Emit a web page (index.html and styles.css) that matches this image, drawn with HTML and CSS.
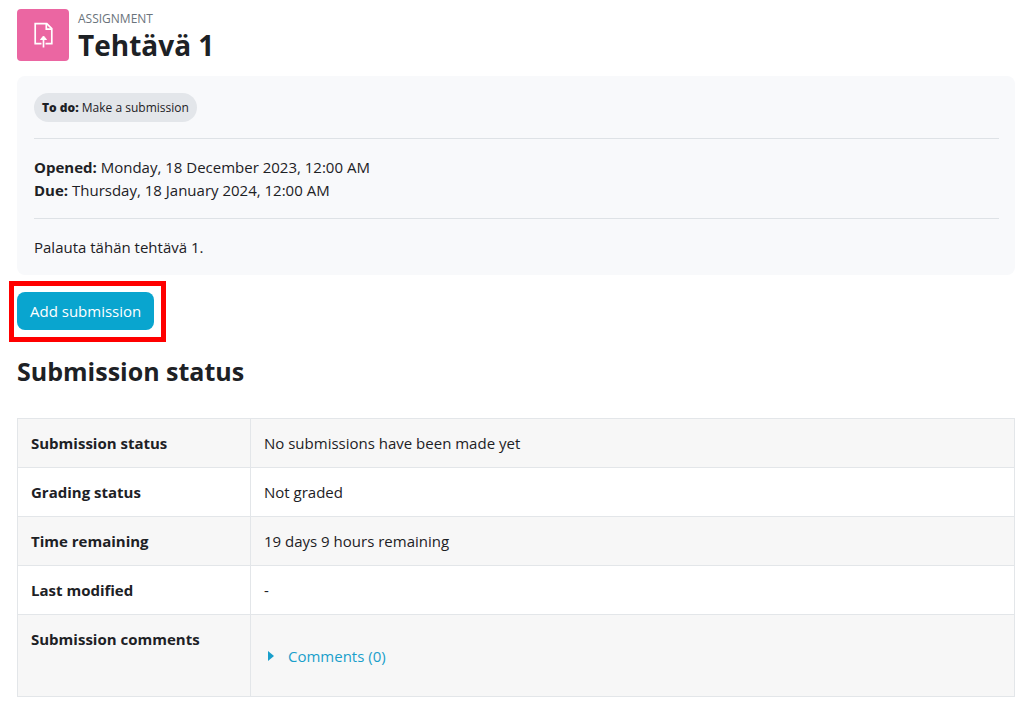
FILE: index.html
```html
<!DOCTYPE html>
<html lang="en">
<head>
<meta charset="utf-8">
<meta name="viewport" content="width=device-width, initial-scale=1">
<title>Tehtävä 1</title>
<link rel="stylesheet" href="styles.css">
</head>
<body>
<main class="page">
  <header class="page-header">
    <div class="activity-icon">
      <svg width="20" height="26" viewBox="0 0 20 26" fill="none" stroke="#fff" stroke-width="1.7" aria-hidden="true">
        <path d="M8.5 21.7H2.2V1.7h11.6l5 5v15H12.5"/>
        <path d="M13.3 1.7v5.5h5.5"/>
        <path d="M10.5 25.5V16"/>
        <path d="M7.5 17.5 10.5 14 13.5 17.5z" fill="#fff" stroke-width="1"/>
      </svg>
    </div>
    <div class="heading">
      <div class="kind">ASSIGNMENT</div>
      <h1 class="title">Tehtävä 1</h1>
    </div>
  </header>

  <section class="info">
    <div class="todo"><strong class="todo-label">To do:</strong> Make a submission</div>
    <div class="dates">
      <div><strong>Opened:</strong> Monday, 18 December 2023, 12:00 AM</div>
      <div><strong>Due:</strong> Thursday, 18 January 2024, 12:00 AM</div>
    </div>
    <p class="description">Palauta tähän tehtävä 1.</p>
  </section>

  <div class="highlight">
    <button class="submit" type="button">Add submission</button>
  </div>

  <h2 class="subtitle">Submission status</h2>
  <table class="status">
    <tbody>
      <tr><th scope="row">Submission status</th><td>No submissions have been made yet</td></tr>
      <tr><th scope="row">Grading status</th><td>Not graded</td></tr>
      <tr><th scope="row">Time remaining</th><td>19 days 9 hours remaining</td></tr>
      <tr><th scope="row">Last modified</th><td>-</td></tr>
      <tr>
        <th scope="row">Submission comments</th>
        <td class="comments-cell">
          <a class="comments" href="#">
            <svg width="6" height="10" viewBox="0 0 6 10" aria-hidden="true"><path d="M0 0l6 5-6 5z" fill="currentColor"/></svg>
            Comments (0)
          </a>
        </td>
      </tr>
    </tbody>
  </table>
</main>
</body>
</html>
```
FILE: styles.css
```css
* { box-sizing: border-box; }

body {
  margin: 0;
  background: #fff;
  color: #1d2125;
  font: 15px/23px "Segoe UI", "Open Sans", "Noto Sans", sans-serif;
}

.page { padding: 9px 9px 7px 17px; }

.page-header {
  display: flex;
  gap: 9px;
}

.activity-icon {
  display: flex;
  align-items: center;
  justify-content: center;
  width: 52px;
  height: 52px;
  border-radius: 4px;
  background: #eb66a2;
}

.kind {
  color: #6a737b;
  font-size: 12px;
  line-height: 19px;
}

.title {
  margin: 0;
  font-size: 28px;
  line-height: 34px;
}

.info {
  margin-top: 14px;
  padding: 17px 16px 16px 17px;
  border-radius: 8px;
  background: #f8f9fb;
}

.todo {
  width: fit-content;
  padding: 0 8px;
  border-radius: 15px;
  background: #e3e6ea;
  font-size: 12px;
  line-height: 29px;
}

.todo-label { font-weight: 800; }

.dates {
  margin: 16px 0 17px;
  padding: 17px 0 16px;
  border: solid #dee2e6;
  border-width: 1px 0;
}

.description { margin: 0; }

.highlight {
  width: fit-content;
  margin: 6px 0 0 -8px;
  padding: 6px 7px 7px 3px;
  border: 5px solid #f00;
}

.submit {
  display: block;
  padding: 8px 13px;
  border: 0;
  border-radius: 8px;
  background: #09a5cf;
  color: #fff;
  font: inherit;
  line-height: 22px;
}

.subtitle {
  margin: 13px 0 31px;
  font-size: 25px;
  line-height: 32px;
}

.status {
  width: 100%;
  border-collapse: collapse;
}

.status th,
.status td {
  padding: 13px 13px 12px;
  border: 1px solid #e3e6e9;
  text-align: left;
  vertical-align: top;
}

.status th { width: 233px; }

.status tr:nth-child(odd) { background: #f7f7f7; }

.status .comments-cell { padding: 29px 17px 28px; }

.comments {
  display: inline-flex;
  align-items: center;
  gap: 14px;
  color: #1a9fcb;
  text-decoration: none;
}
```
